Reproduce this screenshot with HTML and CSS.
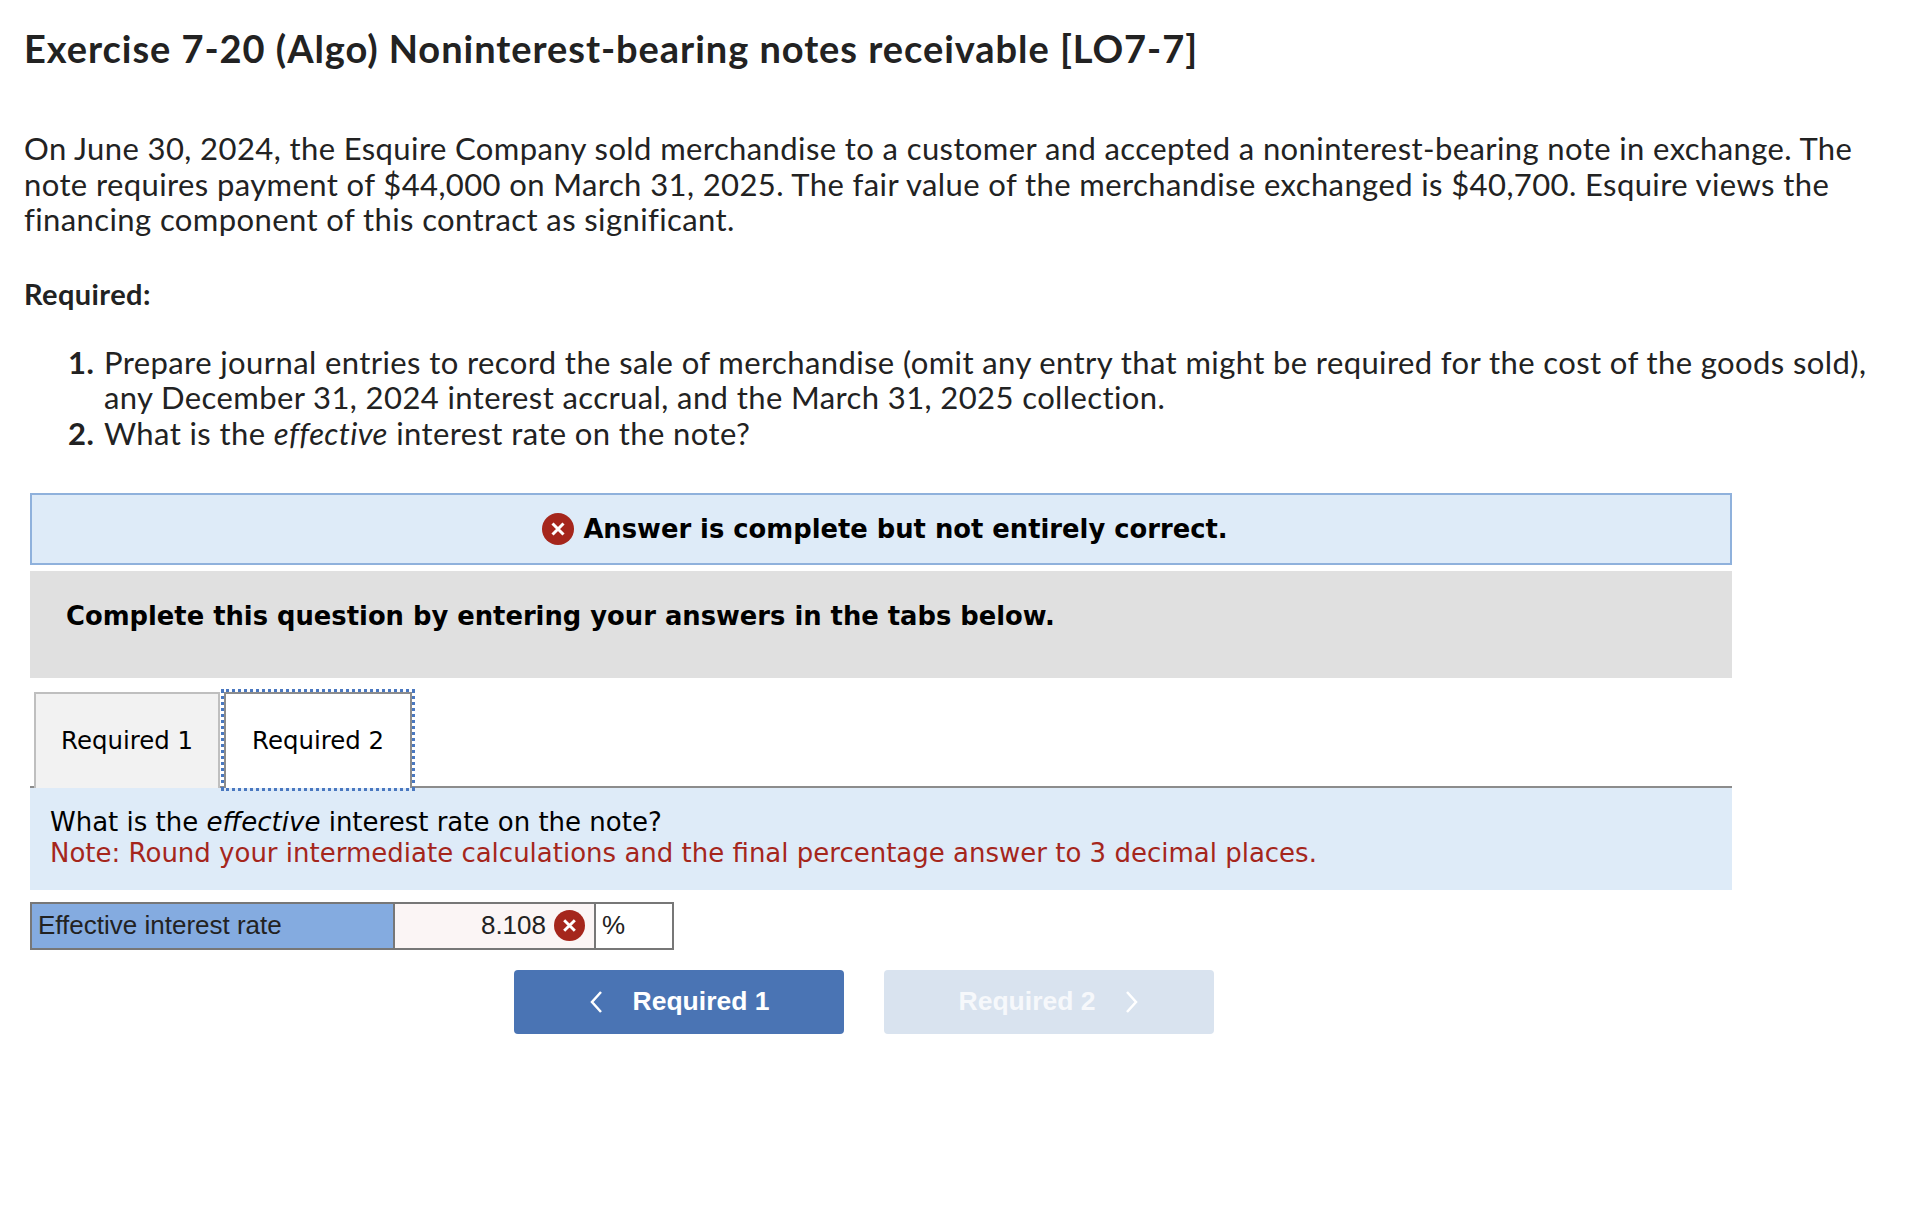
FILE: index.html
```html
<!DOCTYPE html>
<html lang="en">
<head>
<meta charset="utf-8">
<title>Exercise 7-20</title>
<link rel="stylesheet" href="styles.css">
</head>
<body>
<h1 class="title">Exercise 7-20 (Algo) Noninterest-bearing notes receivable [LO7-7]</h1>
<p class="intro">On June 30, 2024, the Esquire Company sold merchandise to a customer and accepted a noninterest-bearing note in exchange. The note requires payment of $44,000 on March 31, 2025. The fair value of the merchandise exchanged is $40,700. Esquire views the financing component of this contract as significant.</p>
<p class="req-label">Required:</p>
<ol class="req-list">
<li><b class="num">1.</b><span>Prepare journal entries to record the sale of merchandise (omit any entry that might be required for the cost of the goods sold), any December 31, 2024 interest accrual, and the March 31, 2025 collection.</span></li>
<li><b class="num">2.</b><span>What is the <i>effective</i> interest rate on the note?</span></li>
</ol>
<section class="widget">
<div class="banner">
<svg class="x-icon" viewBox="0 0 32 32"><circle cx="16" cy="16" r="16" fill="#a5261c"/><path d="M10.5 10.5l11 11M21.5 10.5l-11 11" stroke="#fff" stroke-width="3" fill="none"/></svg>
<span>Answer is complete but not entirely correct.</span>
</div>
<div class="instruct">Complete this question by entering your answers in the tabs below.</div>
<div class="tabs">
<div class="tab">Required 1</div>
<div class="tab tab-active">Required 2</div>
</div>
<div class="panel">
<div>What is the <i>effective</i> interest rate on the note?</div>
<div class="note">Note: Round your intermediate calculations and the final percentage answer to 3 decimal places.</div>
</div>
<div class="answer">
<div class="cell cell-label">Effective interest rate</div>
<div class="cell cell-value">8.108
<svg class="x-icon x-small" viewBox="0 0 32 32"><circle cx="16" cy="16" r="16" fill="#a5261c"/><path d="M10.5 10.5l11 11M21.5 10.5l-11 11" stroke="#fff" stroke-width="3" fill="none"/></svg>
</div>
<div class="cell cell-unit">%</div>
</div>
<div class="nav">
<div class="btn"><svg class="chev" viewBox="0 0 14 24"><path d="M12 2L3 12l9 10" fill="none" stroke="#fff" stroke-width="2.5"/></svg><span>Required 1</span></div>
<div class="btn btn-off"><span>Required 2</span><svg class="chev" viewBox="0 0 14 24"><path d="M2 2l9 10-9 10" fill="none" stroke="#fff" stroke-width="2.5"/></svg></div>
</div>
</section>
</body>
</html>
```
FILE: styles.css
```css
* { box-sizing: border-box; }
html, body { margin: 0; background: #fff; }
body {
  padding: 0 0 0 24px;
  height: 1220px;
  overflow: hidden;
  font-family: "Lato", "Liberation Sans", sans-serif;
  color: #222;
}
.title {
  margin: 0;
  padding-top: 26px;
  font-size: 38px;
  letter-spacing: 0.95px;
  line-height: 44px;
  font-weight: 700;
}
.intro {
  margin: 61px 0 0;
  font-size: 31px;
  letter-spacing: 0.4px;
  line-height: 35.5px;
  width: 1860px;
}
.req-label {
  margin: 38px 0 0;
  font-size: 29px;
  letter-spacing: 0.4px;
  line-height: 36px;
  font-weight: 700;
}
.req-list {
  list-style: none;
  margin: 33px 0 0;
  padding: 0 0 0 44px;
  font-size: 31px;
  letter-spacing: 0.4px;
  line-height: 35.7px;
}
.req-list li { display: flex; width: 1840px; }
.num { width: 36px; flex: none; }
.widget { width: 1702px; margin: 41px 0 0 6px; }
.banner {
  height: 72px;
  background: #deebf8;
  border: 2px solid #8fb1dc;
  display: flex;
  align-items: center;
  justify-content: center;
  gap: 9px;
  padding-left: 8px;
  font: 700 25.8px "DejaVu Sans", sans-serif;
  color: #000;
}
.x-icon { width: 32px; height: 32px; flex: none; }
.x-small { width: 31px; height: 31px; }
.instruct {
  margin-top: 6px;
  height: 107px;
  background: #e0e0e0;
  padding: 27px 36px 0;
  font: 700 25.8px/36px "DejaVu Sans", sans-serif;
  color: #000;
}
.tabs {
  display: flex;
  height: 110px;
  padding: 14px 0 0 4px;
  border-bottom: 2px solid #8c8c8c;
}
.tab {
  width: 186px;
  height: 96px;
  flex: none;
  white-space: nowrap;
  background: #f2f2f2;
  border: 2px solid #bfbfbf;
  border-bottom: 0;
  display: flex;
  align-items: center;
  justify-content: center;
  font: 24.4px "DejaVu Sans", sans-serif;
  color: #000;
}
.tab-active {
  width: 188px;
  margin-left: 4px;
  background: #fff;
  border-color: #8c8c8c;
  outline: 3px dotted #4a78c0;
  outline-offset: 0;
}
.panel {
  height: 102px;
  background: #deebf8;
  padding: 19px 20px 0;
  font: 26px/31px "DejaVu Sans", sans-serif;
  color: #000;
}
.note { color: #a5261c; }
.answer {
  display: flex;
  width: 644px;
  height: 48px;
  margin-top: 12px;
  border: 2px solid #777;
  font: 26px "Liberation Sans", sans-serif;
  color: #222;
  white-space: nowrap;
}
.cell { display: flex; align-items: center; }
.cell-label { width: 361px; background: #84abe0; padding-left: 6px; }
.cell-value {
  width: 203px;
  justify-content: flex-end;
  gap: 8px;
  padding-right: 9px;
  background: #fbf5f5;
  border-left: 2px solid #777;
  border-right: 2px solid #777;
}
.cell-unit { flex: 1; padding-left: 6px; background: #fff; }
.nav {
  display: flex;
  gap: 40px;
  margin: 20px 0 0 484px;
}
.btn {
  width: 330px;
  height: 64px;
  border-radius: 4px;
  background: #4a74b4;
  color: #fff;
  display: flex;
  align-items: center;
  justify-content: center;
  gap: 30px;
  font: 700 26.5px "Liberation Sans", sans-serif;
}
.btn-off { background: #d9e3ef; color: #f6f8fb; }
.chev { width: 14px; height: 24px; flex: none; }
```
